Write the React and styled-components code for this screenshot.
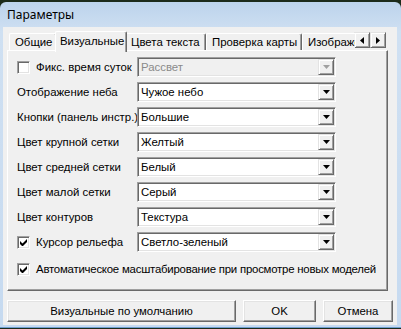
import React from 'react';
import styled, { createGlobalStyle } from 'styled-components';

const Global = createGlobalStyle`
  html, body { margin: 0; padding: 0; background: #1b2a1a; }
  body { width: 401px; height: 329px; overflow: hidden; font-family: "Liberation Sans", Arial, sans-serif; }
  #root { padding-top: 2px; }
`;

const Window = styled.div`
  width: 401px;
  height: 326px;
  box-sizing: border-box;
  border-radius: 6px 6px 0 0;
  background: linear-gradient(#bcd3ec, #cfe0f2 30px, #c6daf0);
  padding: 0 4px 2px 3px;
  display: flex;
  flex-direction: column;
  border-bottom: 1px solid #6f9fcf;
`;

const TitleBar = styled.div`
  height: 25px;
  flex: none;
  display: flex;
  align-items: center;
  padding-left: 4px;
  font-family: "Noto Sans", "Liberation Sans", sans-serif;
  font-size: 12px;
  color: #000;
`;

const Client = styled.div`
  flex: 1;
  background: #f0f0f0;
  padding: 4px 4px 0 4px;
  display: flex;
  flex-direction: column;
  font-size: 11.4px;
  color: #000;
`;

const TabStrip = styled.div`
  height: 19px;
  display: flex;
  width: 381px;
  position: relative;
  z-index: 1;
`;

const TabsTrack = styled.div`
  display: flex;
  align-items: flex-start;
  padding-left: 2px;
  width: 346px;
  overflow: hidden;
  height: 21px;
  flex: none;
`;

const Tab = styled.div`
  flex: none;
  box-sizing: border-box;
  width: ${p => p.$w}px;
  height: ${p => (p.$active ? 21 : 17)}px;
  margin: ${p => (p.$active ? '0 -2px' : '2px 0 0')};
  position: relative;
  z-index: ${p => (p.$active ? 2 : 1)};
  background: #f0f0f0;
  border-top: 1px solid #fff;
  border-left: 1px solid #fff;
  border-right: 1px solid #696969;
  border-radius: 2px 2px 0 0;
  box-shadow: inset -1px 0 #a0a0a0;
  padding-left: ${p => p.$pl}px;
  padding-top: ${p => (p.$active ? 2 : 1)}px;
  line-height: 14px;
  white-space: nowrap;
  overflow: hidden;
`;

const ScrollBtns = styled.div`
  display: flex;
  margin-top: 1px;
  margin-left: -1px;
`;

const ScrollBtn = styled.div`
  width: 16px;
  height: 16px;
  box-sizing: border-box;
  background: #f0f0f0;
  border: 1px solid;
  border-color: #e3e3e3 #696969 #696969 #e3e3e3;
  box-shadow: inset 1px 1px #fff, inset -1px -1px #a0a0a0;
  display: flex;
  align-items: center;
  justify-content: center;
`;

const Panel = styled.div`
  width: 381px;
  height: 241px;
  box-sizing: border-box;
  border: 1px solid;
  border-color: #fff #696969 #696969 #fff;
  box-shadow: inset -1px -1px #a0a0a0;
  padding: 6px 9px 0 9px;
`;

const Grid = styled.div`
  display: grid;
  grid-template-columns: 120px 199px;
  grid-auto-rows: 20px;
  row-gap: 5px;
  align-items: center;
`;

const Label = styled.div`
  white-space: nowrap;
  display: flex;
  align-items: center;
  gap: 6px;
`;

const Check = styled.div`
  width: 13px;
  height: 13px;
  box-sizing: border-box;
  flex: none;
  background: #fff;
  border: 1px solid;
  border-color: #a0a0a0 #fff #fff #a0a0a0;
  box-shadow: inset 1px 1px #696969, inset -1px -1px #e3e3e3;
  display: flex;
  align-items: center;
  justify-content: center;
`;

const Combo = styled.div`
  height: 20px;
  box-sizing: border-box;
  display: flex;
  padding: 1px;
  background: ${p => (p.$disabled ? '#f0f0f0' : '#fff')};
  border: 1px solid;
  border-color: #a0a0a0 #fff #fff #a0a0a0;
  box-shadow: inset 1px 1px #696969, inset -1px -1px #e3e3e3;
`;

const ComboText = styled.div`
  flex: 1;
  padding-left: 2px;
  line-height: 16px;
  white-space: nowrap;
  color: ${p => (p.$disabled ? '#8a8a8a' : '#000')};
`;

const DropBtn = styled.div`
  width: 16px;
  height: 16px;
  box-sizing: border-box;
  background: #f0f0f0;
  border: 1px solid;
  border-color: #e3e3e3 #696969 #696969 #e3e3e3;
  box-shadow: inset 1px 1px #fff, inset -1px -1px #a0a0a0;
  display: flex;
  align-items: center;
  justify-content: center;
`;

const AutoRow = styled.div`
  margin-top: 7px;
  height: 20px;
  display: flex;
  align-items: center;
  gap: 6px;
  white-space: nowrap;
  letter-spacing: -0.22px;
`;

const Footer = styled.div`
  display: flex;
  margin-top: 9px;
  gap: 7px;
`;

const Btn = styled.div`
  width: ${p => p.$w}px;
  height: 22px;
  box-sizing: border-box;
  background: #f0f0f0;
  border: 1px solid;
  border-color: #fff #696969 #696969 #fff;
  box-shadow: inset -1px -1px #a0a0a0, inset 1px 1px #e3e3e3;
  display: flex;
  align-items: center;
  justify-content: center;
`;

const Arrow = ({ color = '#000', dir = 'down' }) => {
  if (dir === 'down')
    return (
      <svg width="7" height="4" viewBox="0 0 7 4"><path d="M0 0h7L3.5 4z" fill={color} /></svg>
    );
  if (dir === 'left')
    return (
      <svg width="4" height="7" viewBox="0 0 4 7"><path d="M4 0v7L0 3.5z" fill={color} /></svg>
    );
  return (
    <svg width="4" height="7" viewBox="0 0 4 7"><path d="M0 0v7L4 3.5z" fill={color} /></svg>
  );
};

const CheckMark = () => (
  <svg width="7" height="7" viewBox="0 0 7 7">
    <path d="M0 2v3l2 2h1l4-4V0L2.5 4.5z" fill="#000" />
  </svg>
);

const ComboBox = ({ value, disabled }) => (
  <Combo $disabled={disabled}>
    <ComboText $disabled={disabled}>{value}</ComboText>
    <DropBtn>
      <Arrow color={disabled ? '#a0a0a0' : '#000'} />
    </DropBtn>
  </Combo>
);

const rows = [
  { label: 'Фикс. время суток', value: 'Рассвет', check: false, disabled: true },
  { label: 'Отображение неба', value: 'Чужое небо' },
  { label: 'Кнопки (панель инстр.)', value: 'Большие' },
  { label: 'Цвет крупной сетки', value: 'Желтый' },
  { label: 'Цвет средней сетки', value: 'Белый' },
  { label: 'Цвет малой сетки', value: 'Серый' },
  { label: 'Цвет контуров', value: 'Текстура' },
  { label: 'Курсор рельефа', value: 'Светло-зеленый', check: true },
];

const tabs = [
  { t: 'Общие', w: 48, pl: 5 },
  { t: 'Визуальные', w: 72, pl: 4, active: true },
  { t: 'Цвета текста', w: 81, pl: 5 },
  { t: 'Проверка карты', w: 96, pl: 5 },
  { t: 'Изображение', w: 80, pl: 5 },
];

export default function App() {
  return (
    <>
      <Global />
      <Window>
        <TitleBar>Параметры</TitleBar>
        <Client>
          <TabStrip>
            <TabsTrack>
              {tabs.map(tb => (
                <Tab key={tb.t} $w={tb.w} $pl={tb.pl} $active={tb.active}>{tb.t}</Tab>
              ))}
            </TabsTrack>
            <ScrollBtns>
              <ScrollBtn><Arrow dir="left" /></ScrollBtn>
              <ScrollBtn><Arrow dir="right" /></ScrollBtn>
            </ScrollBtns>
          </TabStrip>
          <Panel>
            <Grid>
              {rows.map(r => (
                <React.Fragment key={r.label}>
                  <Label>
                    {r.check !== undefined && <Check>{r.check && <CheckMark />}</Check>}
                    {r.label}
                  </Label>
                  <ComboBox value={r.value} disabled={r.disabled} />
                </React.Fragment>
              ))}
            </Grid>
            <AutoRow>
              <Check><CheckMark /></Check>
              Автоматическое масштабирование при просмотре новых моделей
            </AutoRow>
          </Panel>
          <Footer>
            <Btn $w={229}>Визуальные по умолчанию</Btn>
            <Btn $w={73}>OK</Btn>
            <Btn $w={70}>Отмена</Btn>
          </Footer>
        </Client>
      </Window>
    </>
  );
}
